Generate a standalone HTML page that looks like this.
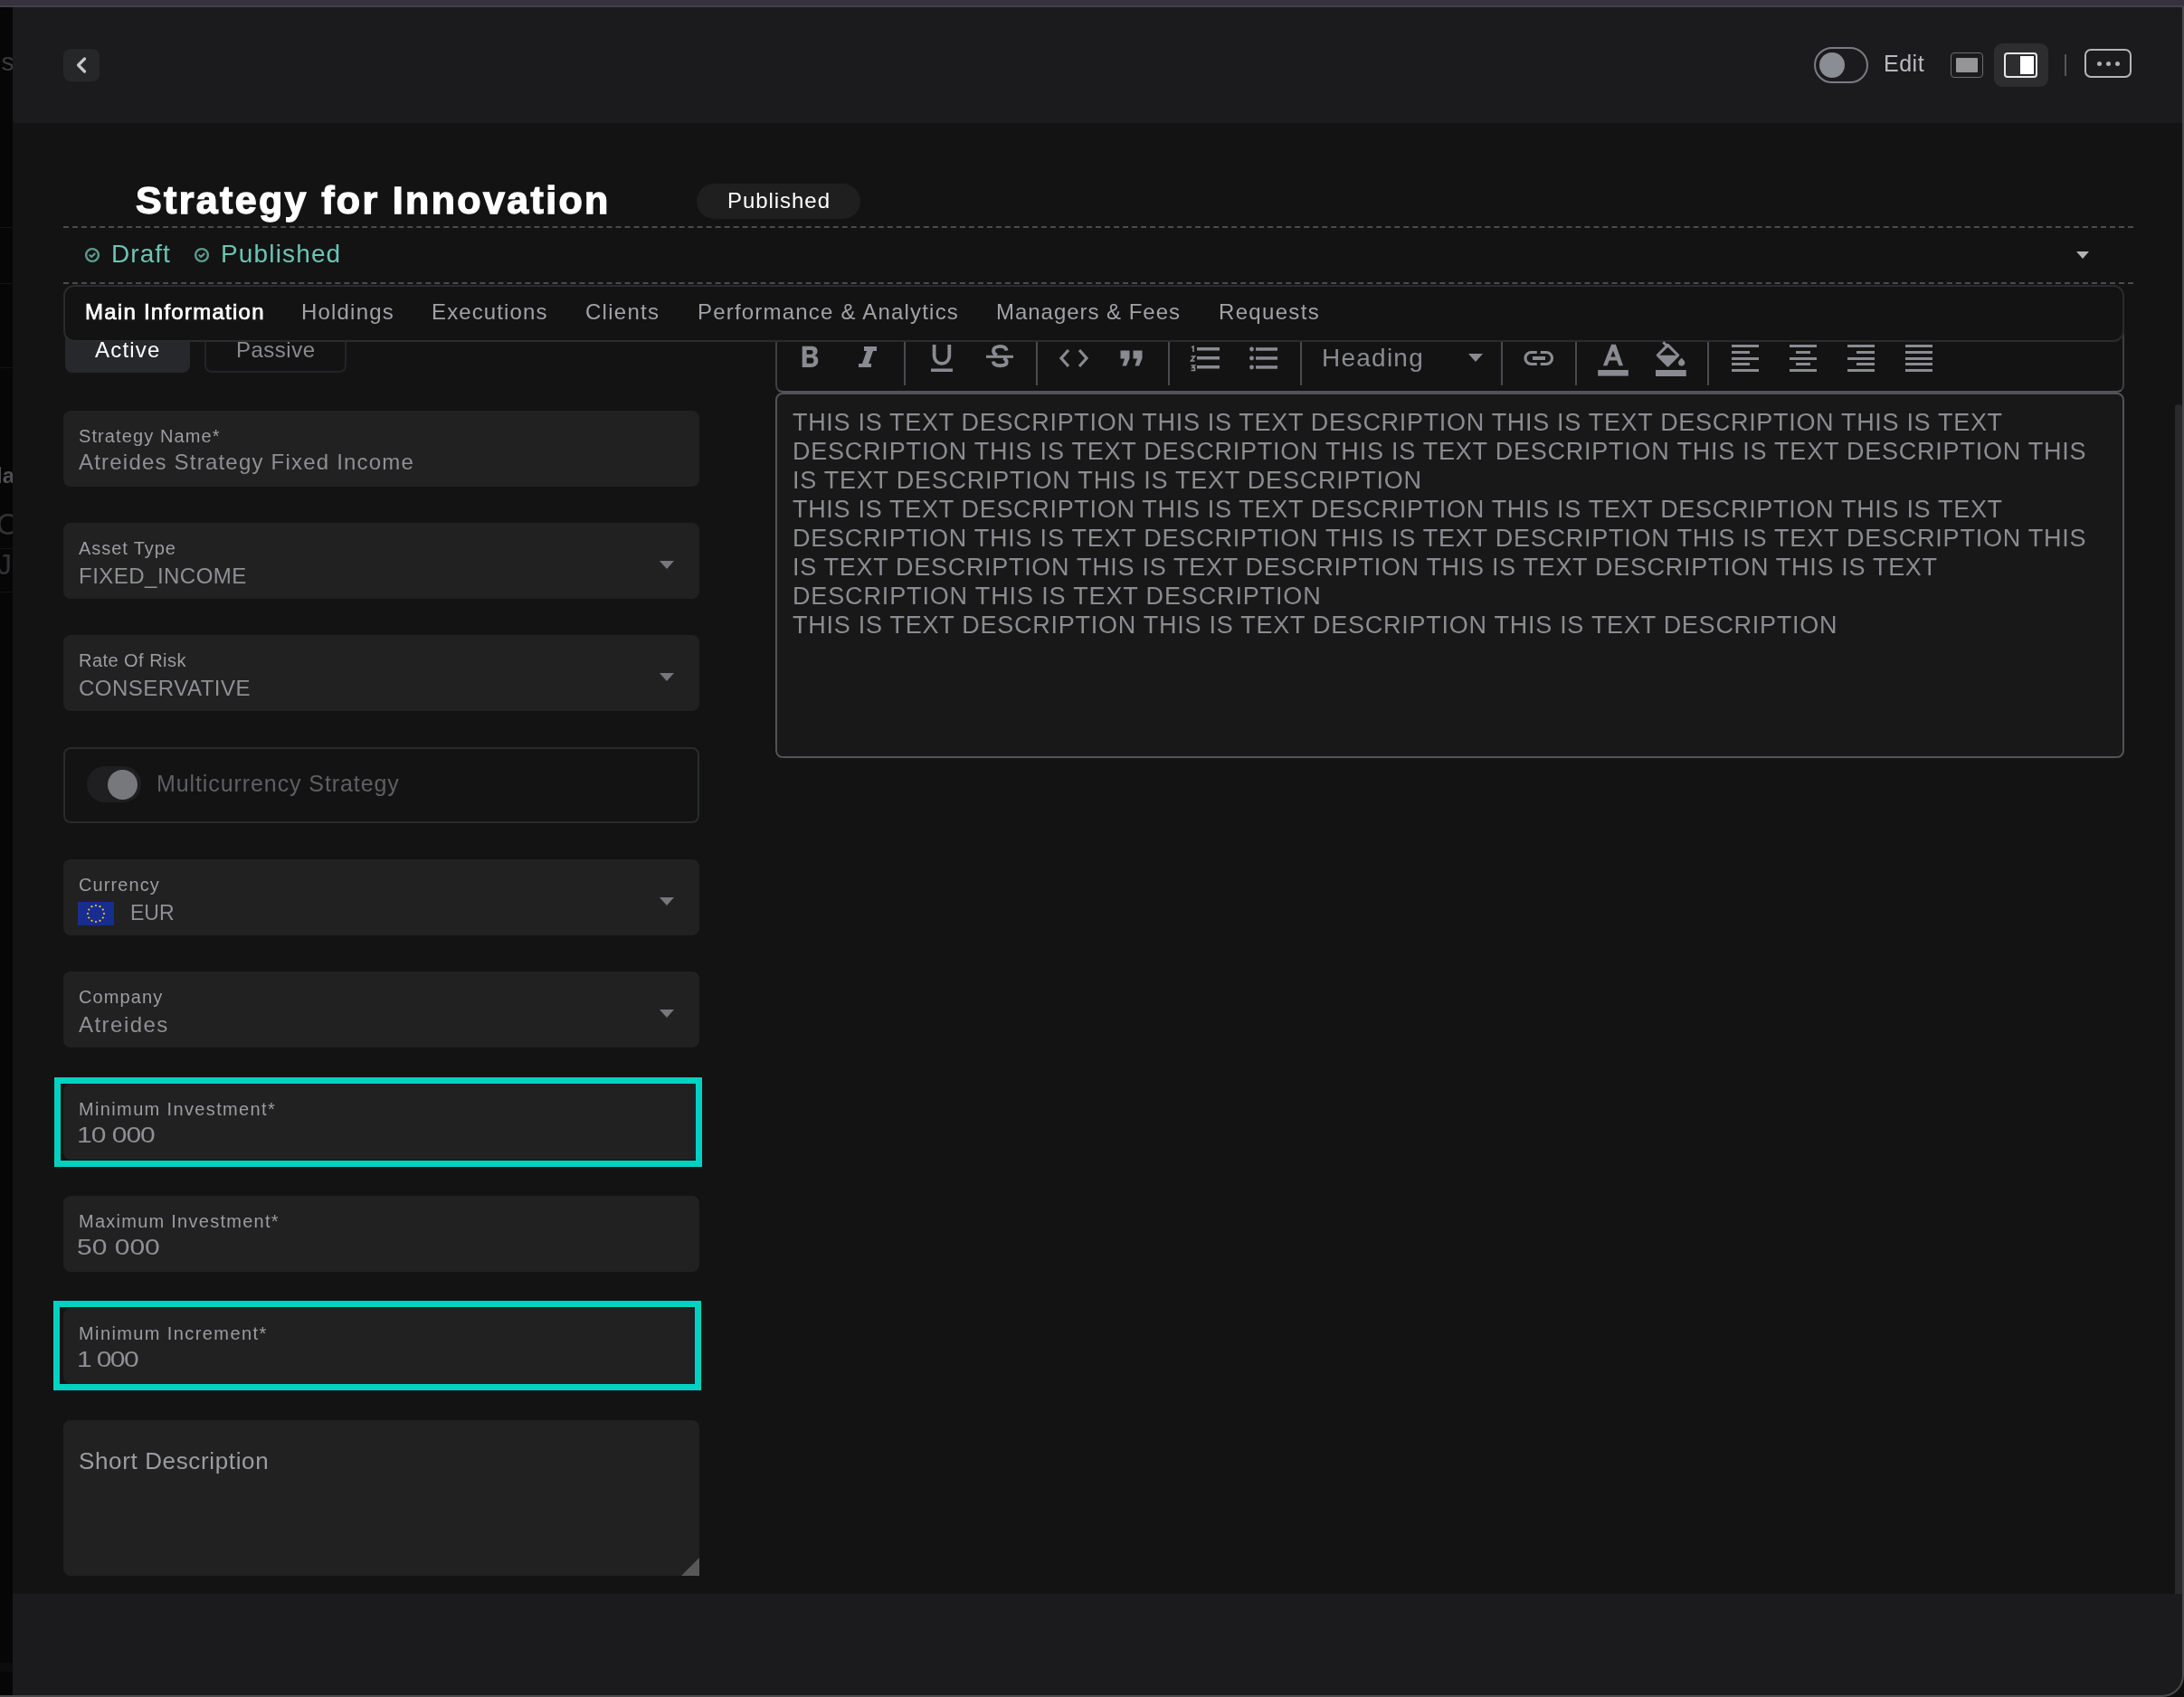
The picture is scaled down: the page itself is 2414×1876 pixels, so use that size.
<!DOCTYPE html>
<html><head><meta charset="utf-8"><title>Strategy for Innovation</title>
<style>
html,body{margin:0;padding:0;width:2414px;height:1876px;overflow:hidden;background:#131313;}
body{position:relative;font-family:"Liberation Sans",sans-serif;}
.r{position:absolute;}
.t{position:absolute;white-space:nowrap;will-change:transform;}
</style></head><body>
<div class="r" style="left:0px;top:0px;width:2414px;height:1876px;background:#131313"></div>
<div class="r" style="left:0px;top:0px;width:2414px;height:6px;background:#36313f"></div>
<div class="r" style="left:0px;top:6px;width:2414px;height:2px;background:#434146"></div>
<div class="r" style="left:0px;top:8px;width:14px;height:1868px;background:#060607"></div>
<div class="r" style="left:0;top:8px;width:14px;height:1866px;overflow:hidden"><div class="t" style="left:-14px;top:46px;font-size:28px;line-height:30px;color:#3b3b3d">ns</div><div class="t" style="left:-4px;top:503px;font-size:24px;line-height:30px;color:#505052;font-weight:700">la</div><div class="t" style="left:-4px;top:557px;font-size:33px;line-height:30px;color:#333335">Oc</div><div class="t" style="left:-3px;top:601px;font-size:32px;line-height:30px;color:#333335">Jo</div><div class="r" style="left:0;top:243px;width:14px;height:1px;background:#141415"></div><div class="r" style="left:0;top:305px;width:14px;height:1px;background:#141415"></div><div class="r" style="left:0;top:398px;width:14px;height:1px;background:#141415"></div><div class="r" style="left:0;top:598px;width:14px;height:1px;background:#141415"></div><div class="r" style="left:0;top:646px;width:14px;height:1px;background:#141415"></div></div>
<div class="r" style="left:2380px;top:1840px;width:34px;height:36px;background:#0e0e0b"></div>
<div class="r" style="left:14px;top:8px;width:2398px;height:128px;background:#1b1b1d"></div>
<div class="r" style="left:14px;top:1762px;width:2398px;height:114px;background:#1b1b1d;border-bottom-right-radius:22px"></div>
<div class="r" style="left:2412px;top:8px;width:2px;height:1842px;background:#4a4a4c"></div>
<div class="r" style="left:0px;top:1874px;width:2390px;height:2px;background:#4a4a4c"></div>
<div class="r" style="left:0px;top:1838px;width:14px;height:10px;background:#0b0c0b"></div>
<div class="r" style="left:2370px;top:1832px;width:42px;height:42px;border-right:2px solid #4a4a4c;border-bottom:2px solid #4a4a4c;border-bottom-right-radius:24px;"></div>
<div class="r" style="left:2404px;top:447px;width:8px;height:1315px;background:#29292b;border-top-left-radius:4px;border-top-right-radius:4px"></div>
<div class="r" style="left:70px;top:54px;width:40px;height:36px;background:#262729;border-radius:8px"></div>
<svg class="r" style="left:80px;top:60px" width="20" height="24" viewBox="0 0 20 24"><path d="M13.5 5 L6.5 12 L13.5 19" fill="none" stroke="#c9c9cc" stroke-width="3.2" stroke-linecap="round" stroke-linejoin="round"/></svg>
<div class="r" style="left:2005px;top:52px;width:60px;height:40px;box-sizing:border-box;border:2.5px solid #7b7c82;border-radius:20px"></div>
<div class="r" style="left:2011px;top:58px;width:28px;height:28px;border-radius:50%;background:#8b8d94"></div>
<div class="t" style="left:2082.00px;top:58.33px;font-size:25px;line-height:25px;color:#b9bac1;font-weight:400;letter-spacing:0.5px;">Edit</div>
<div class="r" style="left:2156px;top:58px;width:36px;height:28px;box-sizing:border-box;border:1.6px solid #6d6d71;border-radius:4px"></div>
<div class="r" style="left:2162px;top:64px;width:24px;height:16px;background:#959595;border-radius:1px"></div>
<div class="r" style="left:2204px;top:48px;width:60px;height:48px;background:#2d2d30;border-radius:9px"></div>
<div class="r" style="left:2215px;top:58px;width:37px;height:28px;box-sizing:border-box;border:2px solid #e6e6e6;border-radius:4px;background:#2d2d30"></div>
<div class="r" style="left:2233px;top:62px;width:15px;height:20px;background:#ffffff"></div>
<div class="r" style="left:2282px;top:60px;width:2px;height:24px;background:#56565a"></div>
<div class="r" style="left:2304px;top:54px;width:52px;height:32px;box-sizing:border-box;border:2.5px solid #b5b5b8;border-radius:7px"></div>
<div class="r" style="left:2317.5px;top:68px;width:5px;height:5px;border-radius:50%;background:#b0b0b3"></div>
<div class="r" style="left:2327.5px;top:68px;width:5px;height:5px;border-radius:50%;background:#b0b0b3"></div>
<div class="r" style="left:2337.5px;top:68px;width:5px;height:5px;border-radius:50%;background:#b0b0b3"></div>
<div class="t" style="left:150.20px;top:199.59px;font-size:43px;line-height:43px;color:#ffffff;font-weight:700;letter-spacing:2.35px;-webkit-text-stroke:1.3px #ffffff;">Strategy for Innovation</div>
<div class="r" style="left:770px;top:203px;width:181px;height:39px;background:#1f1f1f;border-radius:20px"></div>
<div class="t" style="left:803.50px;top:209.98px;font-size:24px;line-height:24px;color:#ffffff;font-weight:400;letter-spacing:0.95px;">Published</div>
<svg class="r" style="left:70px;top:250px" width="2288" height="2" viewBox="0 0 2288 2"><line x1="0" y1="1" x2="2288" y2="1" stroke="#4b4b4f" stroke-width="2" stroke-dasharray="6 4.00877"/></svg>
<svg class="r" style="left:70px;top:312px" width="2288" height="2" viewBox="0 0 2288 2"><line x1="0" y1="1" x2="2288" y2="1" stroke="#4b4b4f" stroke-width="2" stroke-dasharray="6 4.00877"/></svg>
<svg class="r" style="left:93px;top:273px" width="18" height="18" viewBox="0 0 18 18"><circle cx="9" cy="9" r="6.9" fill="none" stroke="#5a9b8e" stroke-width="2.4"/><path d="M6.3 9.2 L8.2 11 L11.6 7.6" fill="none" stroke="#5a9b8e" stroke-width="2.2" stroke-linecap="round" stroke-linejoin="round"/></svg>
<div class="t" style="left:123.00px;top:267.29px;font-size:28px;line-height:28px;color:#6cc4b4;font-weight:400;letter-spacing:1.05px;">Draft</div>
<svg class="r" style="left:214px;top:273px" width="18" height="18" viewBox="0 0 18 18"><circle cx="9" cy="9" r="6.9" fill="none" stroke="#5a9b8e" stroke-width="2.4"/><path d="M6.3 9.2 L8.2 11 L11.6 7.6" fill="none" stroke="#5a9b8e" stroke-width="2.2" stroke-linecap="round" stroke-linejoin="round"/></svg>
<div class="t" style="left:243.50px;top:267.29px;font-size:28px;line-height:28px;color:#6cc4b4;font-weight:400;letter-spacing:1.15px;">Published</div>
<svg class="r" style="left:2295px;top:278px" width="14" height="8" viewBox="0 0 14 8"><path d="M0 0 H14 L7 8 Z" fill="#b3b3b5"/></svg>
<div class="r" style="left:72px;top:360px;width:138px;height:52px;background:#27282b;border-radius:8px"></div>
<div class="r" style="left:226px;top:360px;width:157px;height:52px;box-sizing:border-box;border:2px solid #232427;border-radius:8px"></div>
<div class="r" style="left:857px;top:360px;width:1491px;height:74px;box-sizing:border-box;border:2px solid #3e3f42;border-bottom-color:#525357;border-top:none;border-radius:0 0 8px 8px"></div>
<div class="r" style="left:857px;top:434px;width:1491px;height:404px;box-sizing:border-box;border:2px solid #525357;border-radius:8px;background:#181818"></div>
<div class="r" style="left:70px;top:315px;width:2278px;height:63px;box-sizing:border-box;border:2px solid #2a2b2d;border-radius:12px;background:#131313"></div>
<div class="t" style="left:93.50px;top:333.18px;font-size:24px;line-height:24px;color:#ffffff;font-weight:400;letter-spacing:1.25px;-webkit-text-stroke:0.7px #ffffff;">Main Information</div>
<div class="t" style="left:332.60px;top:333.18px;font-size:24px;line-height:24px;color:#a1a2a8;font-weight:400;letter-spacing:1.19px;">Holdings</div>
<div class="t" style="left:477.30px;top:333.18px;font-size:24px;line-height:24px;color:#a1a2a8;font-weight:400;letter-spacing:1.12px;">Executions</div>
<div class="t" style="left:646.80px;top:333.18px;font-size:24px;line-height:24px;color:#a1a2a8;font-weight:400;letter-spacing:1.26px;">Clients</div>
<div class="t" style="left:771.00px;top:333.18px;font-size:24px;line-height:24px;color:#a1a2a8;font-weight:400;letter-spacing:1.2px;">Performance &amp; Analytics</div>
<div class="t" style="left:1101.00px;top:333.18px;font-size:24px;line-height:24px;color:#a1a2a8;font-weight:400;letter-spacing:0.97px;">Managers &amp; Fees</div>
<div class="t" style="left:1346.70px;top:333.18px;font-size:24px;line-height:24px;color:#a1a2a8;font-weight:400;letter-spacing:1.32px;">Requests</div>
<div class="t" style="left:104.80px;top:374.68px;font-size:24px;line-height:24px;color:#ffffff;font-weight:400;letter-spacing:1.2px;">Active</div>
<div class="t" style="left:261.00px;top:374.68px;font-size:24px;line-height:24px;color:#8a8b90;font-weight:400;letter-spacing:0.5px;">Passive</div>
<div class="r" style="left:999px;top:378px;width:2px;height:48px;background:#4a4b4e"></div>
<div class="r" style="left:1145px;top:378px;width:2px;height:48px;background:#4a4b4e"></div>
<div class="r" style="left:1291px;top:378px;width:2px;height:48px;background:#4a4b4e"></div>
<div class="r" style="left:1437px;top:378px;width:2px;height:48px;background:#4a4b4e"></div>
<div class="r" style="left:1659px;top:378px;width:2px;height:48px;background:#4a4b4e"></div>
<div class="r" style="left:1741px;top:378px;width:2px;height:48px;background:#4a4b4e"></div>
<div class="r" style="left:1887px;top:378px;width:2px;height:48px;background:#4a4b4e"></div>
<svg class="r" style="left:886px;top:382px" width="19" height="24" viewBox="0 0 19 24"><path fill-rule="evenodd" d="M0.7 0.8 H11 C15.4 0.8 17.6 3 17.6 6.2 C17.6 8.5 16.4 10.3 14.2 11 C17 11.6 18.3 13.8 18.3 16.5 C18.3 20.6 15.6 23.9 10.8 23.9 H0.7 Z M5.6 4.9 V9.7 H10.2 C11.9 9.7 12.7 8.8 12.7 7.3 C12.7 5.8 11.9 4.9 10.2 4.9 Z M5.6 13.6 V19.8 H10.6 C12.5 19.8 13.4 18.7 13.4 16.7 C13.4 14.7 12.5 13.6 10.6 13.6 Z" fill="#8a8b92"/></svg>
<svg class="r" style="left:947px;top:381px" width="24" height="27" viewBox="0 0 24 27"><path d="M8 2 H22 V7 H18 L13 21 H16 V25 H2 V21 H6 L11 7 H8 Z" fill="#8a8b92"/></svg>
<svg class="r" style="left:1027px;top:379px" width="28" height="34" viewBox="0 0 28 34"><path d="M5.6 2 V14.6 A8.35 8.35 0 0 0 22.3 14.6 V2" fill="none" stroke="#8a8b92" stroke-width="3.8"/><rect x="2" y="28.5" width="24" height="3.5" fill="#8a8b92"/></svg>
<svg class="r" style="left:1089px;top:379px" width="32" height="28" viewBox="0 0 32 28"><path d="M23.6 8.6 C23 5.2 20.3 3.9 16.5 3.9 C12.6 3.9 9.1 5.5 9.1 9 C9.1 11.5 10.6 12.8 13 13.8" fill="none" stroke="#8a8b92" stroke-width="3.9"/><path d="M20.3 17 C22.6 18 23.7 19.3 23.7 21.3 C23.7 24.3 20.6 25.2 16.4 25.2 C12 25.2 9.2 23.8 8.8 20.6" fill="none" stroke="#8a8b92" stroke-width="3.9"/><rect x="1" y="13.8" width="30" height="3" fill="#8a8b92"/></svg>
<svg class="r" style="left:1169px;top:384px" width="36" height="24" viewBox="0 0 36 24"><path d="M12 3 L4 12 L12 21 M24 3 L32 12 L24 21" fill="none" stroke="#8a8b92" stroke-width="3.2"/></svg>
<svg class="r" style="left:1237px;top:386px" width="28" height="20" viewBox="0 0 28 20"><path d="M1.5 1.5 H11.5 V10 L8 18.5 H3.5 L6 10.5 H1.5 Z M15.5 1.5 H25.5 V10 L22 18.5 H17.5 L20 10.5 H15.5 Z" fill="#8a8b92"/></svg>
<svg class="r" style="left:1314px;top:381px" width="36" height="30" viewBox="0 0 36 30"><path d="M3 3 L5 2 V8" fill="none" stroke="#8a8b92" stroke-width="1.6"/><path d="M2.5 13 H6.5 L2.5 18 H6.5" fill="none" stroke="#8a8b92" stroke-width="1.6"/><path d="M2.5 23 H6.5 L4 25.5 H6.5 V28.5 H2.5" fill="none" stroke="#8a8b92" stroke-width="1.6"/><rect x="9" y="3" width="25" height="3.5" fill="#8a8b92"/><rect x="9" y="13" width="25" height="3.5" fill="#8a8b92"/><rect x="9" y="23" width="25" height="3.5" fill="#8a8b92"/></svg>
<svg class="r" style="left:1380px;top:381px" width="34" height="30" viewBox="0 0 34 30"><circle cx="3.5" cy="5" r="2.4" fill="#8a8b92"/><circle cx="3.5" cy="15" r="2.4" fill="#8a8b92"/><circle cx="3.5" cy="25" r="2.4" fill="#8a8b92"/><rect x="8" y="3.2" width="24" height="3.5" fill="#8a8b92"/><rect x="8" y="13.2" width="24" height="3.5" fill="#8a8b92"/><rect x="8" y="23.2" width="24" height="3.5" fill="#8a8b92"/></svg>
<div class="t" style="left:1461.00px;top:381.69px;font-size:28px;line-height:28px;color:#8a8b92;font-weight:400;letter-spacing:1.24px;">Heading</div>
<svg class="r" style="left:1623px;top:391px" width="16" height="9" viewBox="0 0 16 9"><path d="M0 0 H16 L8 9 Z" fill="#8a8b92"/></svg>
<svg class="r" style="left:1683px;top:386px" width="36" height="20" viewBox="0 0 36 20"><path d="M15.8 3.5 H9.5 A6.5 6.5 0 0 0 9.5 16.5 H15.8 M19.7 3.5 H26 A6.5 6.5 0 0 1 26 16.5 H19.7" fill="none" stroke="#8a8b92" stroke-width="3.2"/><rect x="11" y="8" width="14" height="4" fill="#8a8b92"/></svg>
<svg class="r" style="left:1766px;top:380px" width="36" height="37" viewBox="0 0 36 37"><path fill-rule="evenodd" d="M5.9 24.2 L15.06 0.8 H19.9 L28.04 24.2 H23.44 L21.17 18.4 H12.77 L10.5 24.2 Z M14.25 14.6 H19.69 L16.97 7.65 Z" fill="#8a8b92"/><rect x="0.2" y="29" width="33.6" height="6.6" fill="#8a8b92"/></svg>
<svg class="r" style="left:1829px;top:377px" width="36" height="40" viewBox="0 0 36 40"><path d="M9.3 1.2 L14.8 6.7" stroke="#8a8b92" stroke-width="3" fill="none"/><path d="M14.5 4.4 L25.8 15.7 L14.5 27 L3.2 15.7 Z" fill="none" stroke="#8a8b92" stroke-width="3" stroke-linejoin="round"/><path d="M3 15.7 H26 L14.5 27.2 Z" fill="#8a8b92"/><path d="M29.65 18.6 C31.2 20.6 33.3 22.2 33.3 23.75 A3.65 3.65 0 0 1 26 23.75 C26 22.2 28.1 20.6 29.65 18.6 Z" fill="#8a8b92"/><rect x="1" y="32" width="33.75" height="7" fill="#8a8b92"/></svg>
<div class="r" style="left:1914px;top:381.0px;width:30px;height:3.0px;background:#8a8b92"></div>
<div class="r" style="left:1914px;top:387.7px;width:20px;height:3.0px;background:#8a8b92"></div>
<div class="r" style="left:1914px;top:394.5px;width:30px;height:3.0px;background:#8a8b92"></div>
<div class="r" style="left:1914px;top:401.1px;width:20px;height:3.0px;background:#8a8b92"></div>
<div class="r" style="left:1914px;top:407.8px;width:30px;height:3.0px;background:#8a8b92"></div>
<div class="r" style="left:1978.0px;top:381.0px;width:30.0px;height:3.0px;background:#8a8b92"></div>
<div class="r" style="left:1985.0px;top:387.7px;width:16.0px;height:3.0px;background:#8a8b92"></div>
<div class="r" style="left:1978.0px;top:394.5px;width:30.0px;height:3.0px;background:#8a8b92"></div>
<div class="r" style="left:1985.0px;top:401.1px;width:16.0px;height:3.0px;background:#8a8b92"></div>
<div class="r" style="left:1978.0px;top:407.8px;width:30.0px;height:3.0px;background:#8a8b92"></div>
<div class="r" style="left:2042px;top:381.0px;width:30px;height:3.0px;background:#8a8b92"></div>
<div class="r" style="left:2052px;top:387.7px;width:20px;height:3.0px;background:#8a8b92"></div>
<div class="r" style="left:2042px;top:394.5px;width:30px;height:3.0px;background:#8a8b92"></div>
<div class="r" style="left:2052px;top:401.1px;width:20px;height:3.0px;background:#8a8b92"></div>
<div class="r" style="left:2042px;top:407.8px;width:30px;height:3.0px;background:#8a8b92"></div>
<div class="r" style="left:2106px;top:381.0px;width:30px;height:3.0px;background:#8a8b92"></div>
<div class="r" style="left:2106px;top:387.7px;width:30px;height:3.0px;background:#8a8b92"></div>
<div class="r" style="left:2106px;top:394.5px;width:30px;height:3.0px;background:#8a8b92"></div>
<div class="r" style="left:2106px;top:401.1px;width:30px;height:3.0px;background:#8a8b92"></div>
<div class="r" style="left:2106px;top:407.8px;width:30px;height:3.0px;background:#8a8b92"></div>
<div class="t" style="left:876.00px;top:453.84px;font-size:27px;line-height:27px;color:#8b8c91;font-weight:400;letter-spacing:0.69px;">THIS IS TEXT DESCRIPTION THIS IS TEXT DESCRIPTION THIS IS TEXT DESCRIPTION THIS IS TEXT</div>
<div class="t" style="left:876.00px;top:485.84px;font-size:27px;line-height:27px;color:#8b8c91;font-weight:400;letter-spacing:0.77px;">DESCRIPTION THIS IS TEXT DESCRIPTION THIS IS TEXT DESCRIPTION THIS IS TEXT DESCRIPTION THIS</div>
<div class="t" style="left:876.00px;top:517.84px;font-size:27px;line-height:27px;color:#8b8c91;font-weight:400;letter-spacing:0.765px;">IS TEXT DESCRIPTION THIS IS TEXT DESCRIPTION</div>
<div class="t" style="left:876.00px;top:549.84px;font-size:27px;line-height:27px;color:#8b8c91;font-weight:400;letter-spacing:0.69px;">THIS IS TEXT DESCRIPTION THIS IS TEXT DESCRIPTION THIS IS TEXT DESCRIPTION THIS IS TEXT</div>
<div class="t" style="left:876.00px;top:581.84px;font-size:27px;line-height:27px;color:#8b8c91;font-weight:400;letter-spacing:0.77px;">DESCRIPTION THIS IS TEXT DESCRIPTION THIS IS TEXT DESCRIPTION THIS IS TEXT DESCRIPTION THIS</div>
<div class="t" style="left:876.00px;top:613.84px;font-size:27px;line-height:27px;color:#8b8c91;font-weight:400;letter-spacing:0.695px;">IS TEXT DESCRIPTION THIS IS TEXT DESCRIPTION THIS IS TEXT DESCRIPTION THIS IS TEXT</div>
<div class="t" style="left:876.00px;top:645.84px;font-size:27px;line-height:27px;color:#8b8c91;font-weight:400;letter-spacing:0.86px;">DESCRIPTION THIS IS TEXT DESCRIPTION</div>
<div class="t" style="left:876.00px;top:677.84px;font-size:27px;line-height:27px;color:#8b8c91;font-weight:400;letter-spacing:0.745px;">THIS IS TEXT DESCRIPTION THIS IS TEXT DESCRIPTION THIS IS TEXT DESCRIPTION</div>
<div class="r" style="left:70px;top:454px;width:703px;height:84px;background:#212121;border-radius:8px"></div>
<div class="t" style="left:87.00px;top:472.07px;font-size:20px;line-height:20px;color:#9c9da2;font-weight:400;letter-spacing:1.1px;">Strategy Name*</div>
<div class="t" style="left:86.50px;top:498.68px;font-size:24px;line-height:24px;color:#8f9095;font-weight:400;letter-spacing:1.21px;">Atreides Strategy Fixed Income</div>
<div class="r" style="left:70px;top:578px;width:703px;height:84px;background:#212121;border-radius:8px"></div>
<div class="t" style="left:87.00px;top:596.07px;font-size:20px;line-height:20px;color:#9c9da2;font-weight:400;letter-spacing:0.93px;">Asset Type</div>
<div class="t" style="left:86.50px;top:624.68px;font-size:24px;line-height:24px;color:#8f9095;font-weight:400;letter-spacing:0.48px;">FIXED_INCOME</div>
<svg class="r" style="left:729px;top:620px" width="16" height="9" viewBox="0 0 16 9"><path d="M0 0 H16 L8 9 Z" fill="#77787c"/></svg>
<div class="r" style="left:70px;top:702px;width:703px;height:84px;background:#212121;border-radius:8px"></div>
<div class="t" style="left:87.00px;top:720.07px;font-size:20px;line-height:20px;color:#9c9da2;font-weight:400;letter-spacing:0.46px;">Rate Of Risk</div>
<div class="t" style="left:86.50px;top:748.68px;font-size:24px;line-height:24px;color:#8f9095;font-weight:400;letter-spacing:0.5px;">CONSERVATIVE</div>
<svg class="r" style="left:729px;top:744px" width="16" height="9" viewBox="0 0 16 9"><path d="M0 0 H16 L8 9 Z" fill="#77787c"/></svg>
<div class="r" style="left:70px;top:826px;width:703px;height:84px;box-sizing:border-box;border:2px solid #2a2b2d;border-radius:8px"></div>
<div class="r" style="left:96px;top:847px;width:60px;height:40px;background:#1f1f21;border-radius:20px"></div>
<div class="r" style="left:119px;top:851px;width:33px;height:33px;border-radius:50%;background:#77787c"></div>
<div class="t" style="left:173.00px;top:854.33px;font-size:25px;line-height:25px;color:#5e5f63;font-weight:400;letter-spacing:0.91px;">Multicurrency Strategy</div>
<div class="r" style="left:70px;top:950px;width:703px;height:84px;background:#212121;border-radius:8px"></div>
<div class="t" style="left:87.00px;top:968.07px;font-size:20px;line-height:20px;color:#9c9da2;font-weight:400;letter-spacing:1.1px;">Currency</div>
<svg class="r" style="left:86px;top:997px" width="40" height="26" viewBox="0 0 40 26"><rect width="40" height="26" fill="#172d90"/><circle cx="29.00" cy="13.00" r="1.1" fill="#f3d02b"/><circle cx="27.79" cy="17.50" r="1.1" fill="#f3d02b"/><circle cx="24.50" cy="20.79" r="1.1" fill="#f3d02b"/><circle cx="20.00" cy="22.00" r="1.1" fill="#f3d02b"/><circle cx="15.50" cy="20.79" r="1.1" fill="#f3d02b"/><circle cx="12.21" cy="17.50" r="1.1" fill="#f3d02b"/><circle cx="11.00" cy="13.00" r="1.1" fill="#f3d02b"/><circle cx="12.21" cy="8.50" r="1.1" fill="#f3d02b"/><circle cx="15.50" cy="5.21" r="1.1" fill="#f3d02b"/><circle cx="20.00" cy="4.00" r="1.1" fill="#f3d02b"/><circle cx="24.50" cy="5.21" r="1.1" fill="#f3d02b"/><circle cx="27.79" cy="8.50" r="1.1" fill="#f3d02b"/></svg>
<div class="t" style="left:143.50px;top:997.53px;font-size:23px;line-height:23px;color:#8f9095;font-weight:400;letter-spacing:0.0px;">EUR</div>
<svg class="r" style="left:729px;top:992px" width="16" height="9" viewBox="0 0 16 9"><path d="M0 0 H16 L8 9 Z" fill="#77787c"/></svg>
<div class="r" style="left:70px;top:1074px;width:703px;height:84px;background:#212121;border-radius:8px"></div>
<div class="t" style="left:87.00px;top:1092.07px;font-size:20px;line-height:20px;color:#9c9da2;font-weight:400;letter-spacing:1.1px;">Company</div>
<div class="t" style="left:86.50px;top:1120.68px;font-size:24px;line-height:24px;color:#8f9095;font-weight:400;letter-spacing:1.47px;">Atreides</div>
<svg class="r" style="left:729px;top:1116px" width="16" height="9" viewBox="0 0 16 9"><path d="M0 0 H16 L8 9 Z" fill="#77787c"/></svg>
<div class="r" style="left:70px;top:1198px;width:703px;height:84px;background:#212121;border-radius:8px"></div>
<div class="t" style="left:87.00px;top:1216.07px;font-size:20px;line-height:20px;color:#9c9da2;font-weight:400;letter-spacing:1.36px;">Minimum Investment*</div>
<div class="t" style="left:84.60px;top:1242.68px;font-size:24px;line-height:24px;color:#8f9095;font-weight:400;letter-spacing:-0.8px;transform:scaleX(1.25);transform-origin:0 0;">10 000</div>
<div class="r" style="left:70px;top:1322px;width:703px;height:84px;background:#212121;border-radius:8px"></div>
<div class="t" style="left:87.00px;top:1340.07px;font-size:20px;line-height:20px;color:#9c9da2;font-weight:400;letter-spacing:1.26px;">Maximum Investment*</div>
<div class="t" style="left:84.60px;top:1366.68px;font-size:24px;line-height:24px;color:#8f9095;font-weight:400;letter-spacing:0.0px;transform:scaleX(1.25);transform-origin:0 0;">50 000</div>
<div class="r" style="left:70px;top:1446px;width:703px;height:84px;background:#212121;border-radius:8px"></div>
<div class="t" style="left:87.00px;top:1464.07px;font-size:20px;line-height:20px;color:#9c9da2;font-weight:400;letter-spacing:1.4px;">Minimum Increment*</div>
<div class="t" style="left:84.60px;top:1490.68px;font-size:24px;line-height:24px;color:#8f9095;font-weight:400;letter-spacing:-1.3px;transform:scaleX(1.25);transform-origin:0 0;">1 000</div>
<div class="r" style="left:70px;top:1570px;width:703px;height:172px;background:#212121;border-radius:8px"></div>
<div class="t" style="left:86.50px;top:1601.99px;font-size:26px;line-height:26px;color:#9c9da2;font-weight:400;letter-spacing:0.64px;">Short Description</div>
<svg class="r" style="left:753px;top:1722px" width="20" height="20" viewBox="0 0 20 20"><path d="M20 0 V20 H0 Z" fill="#58585a"/></svg>
<div class="r" style="left:60px;top:1191px;width:715.5px;height:99px;box-sizing:border-box;border:7.6px solid #00d2c2"></div>
<div class="r" style="left:59px;top:1438px;width:716px;height:99px;box-sizing:border-box;border:7.6px solid #00d2c2"></div>
</body></html>
